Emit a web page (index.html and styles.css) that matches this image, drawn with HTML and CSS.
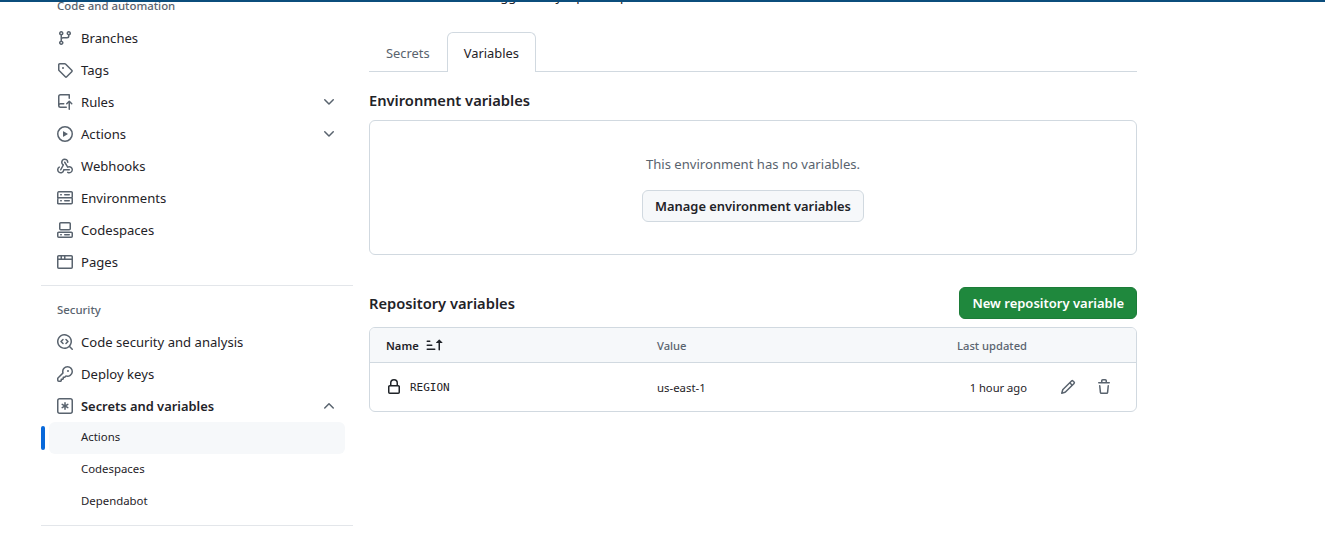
FILE: index.html
```html
<!DOCTYPE html>
<html lang="en">
<head>
<meta charset="utf-8">
<title>Secrets and variables</title>
<link rel="stylesheet" href="styles.css">
</head>
<body>
<div class="topline"></div>
<div class="page">
  <nav class="side">
    <div class="label">Code and automation</div>
    <a class="item"><svg class="ic" viewBox="0 0 16 16"><path d="M9.5 3.25a2.25 2.25 0 1 1 3 2.122V6A2.5 2.5 0 0 1 10 8.5H6a1 1 0 0 0-1 1v1.128a2.251 2.251 0 1 1-1.5 0V5.372a2.25 2.25 0 1 1 1.5 0v1.836A2.493 2.493 0 0 1 6 7h4a1 1 0 0 0 1-1v-.628A2.25 2.25 0 0 1 9.5 3.25Zm-6 0a.75.75 0 1 0 1.5 0 .75.75 0 0 0-1.5 0Zm8.25-.75a.75.75 0 1 0 0 1.5.75.75 0 0 0 0-1.5ZM4.25 12a.75.75 0 1 0 0 1.5.75.75 0 0 0 0-1.5Z"/></svg><span>Branches</span></a>
    <a class="item"><svg class="ic" viewBox="0 0 16 16"><path d="M1 7.775V2.75C1 1.784 1.784 1 2.75 1h5.025c.464 0 .91.184 1.238.513l6.25 6.25a1.75 1.75 0 0 1 0 2.474l-5.026 5.026a1.75 1.75 0 0 1-2.474 0l-6.25-6.25A1.752 1.752 0 0 1 1 7.775Zm1.5 0c0 .066.026.13.073.177l6.25 6.25a.25.25 0 0 0 .354 0l5.025-5.025a.25.25 0 0 0 0-.354l-6.25-6.25a.25.25 0 0 0-.177-.073H2.75a.25.25 0 0 0-.25.25ZM6 5a1 1 0 1 1 0 2 1 1 0 0 1 0-2Z"/></svg><span>Tags</span></a>
    <a class="item"><svg class="ic" viewBox="0 0 16 16"><path d="M1 2.5A2.5 2.5 0 0 1 3.5 0h8.75a.75.75 0 0 1 .75.75v3.5a.75.75 0 0 1-1.5 0V1.5h-8a1 1 0 0 0-1 1v6.708A2.493 2.493 0 0 1 3.5 9h3.25a.75.75 0 0 1 0 1.5H3.5a1 1 0 0 0 0 2h5.75a.75.75 0 0 1 0 1.5H3.5A2.5 2.5 0 0 1 1 11.5Zm13.23 7.79h-.001l-1.224-1.224v6.184a.75.75 0 0 1-1.5 0V9.066L10.28 10.29a.75.75 0 0 1-1.06-1.061l2.505-2.504a.75.75 0 0 1 1.06 0L15.29 9.23a.751.751 0 0 1-.018 1.042.751.751 0 0 1-1.042.018Z"/></svg><span>Rules</span><svg class="chev" viewBox="0 0 16 16"><path d="M12.78 5.22a.749.749 0 0 1 0 1.06l-4.25 4.25a.749.749 0 0 1-1.06 0L3.22 6.28a.749.749 0 1 1 1.06-1.06L8 8.939l3.72-3.719a.749.749 0 0 1 1.06 0Z"/></svg></a>
    <a class="item"><svg class="ic" viewBox="0 0 16 16"><path d="M8 0a8 8 0 1 1 0 16A8 8 0 0 1 8 0ZM1.5 8a6.5 6.5 0 1 0 13 0 6.5 6.5 0 0 0-13 0Zm4.879-2.773 4.264 2.559a.25.25 0 0 1 0 .428l-4.264 2.559A.25.25 0 0 1 6 10.559V5.442a.25.25 0 0 1 .379-.215Z"/></svg><span>Actions</span><svg class="chev" viewBox="0 0 16 16"><path d="M12.78 5.22a.749.749 0 0 1 0 1.06l-4.25 4.25a.749.749 0 0 1-1.06 0L3.22 6.28a.749.749 0 1 1 1.06-1.06L8 8.939l3.72-3.719a.749.749 0 0 1 1.06 0Z"/></svg></a>
    <a class="item"><svg class="ic" viewBox="0 0 16 16"><path d="M5.5 4.25a2.25 2.25 0 0 1 4.5 0 .75.75 0 0 0 1.5 0 3.75 3.75 0 1 0-6.14 2.889l-2.272 4.258a.75.75 0 0 0 1.324.706L7 7.25a.75.75 0 0 0-.309-1.015A2.25 2.25 0 0 1 5.5 4.25Z"/><path d="M7.364 3.607a.75.75 0 0 1 1.03.257l2.608 4.349a3.75 3.75 0 1 1-.628 6.785.75.75 0 0 1 .752-1.299 2.25 2.25 0 1 0-.033-3.88.75.75 0 0 1-1.03-.256L7.107 4.636a.75.75 0 0 1 .257-1.03Z"/><path d="M2.9 8.776A.75.75 0 0 1 2.625 9.8 2.25 2.25 0 1 0 6 11.75a.75.75 0 0 1 .75-.751h5.5a.75.75 0 0 1 0 1.5H7.425a3.751 3.751 0 1 1-5.55-3.998.75.75 0 0 1 1.024.274Z"/></svg><span>Webhooks</span></a>
    <a class="item"><svg class="ic" viewBox="0 0 16 16"><path d="M1.75 1h12.5c.966 0 1.75.784 1.75 1.75v4c0 .372-.116.717-.314 1 .198.283.314.628.314 1v4a1.75 1.75 0 0 1-1.75 1.75H1.75A1.75 1.75 0 0 1 0 13.75v-4c0-.372.116-.717.314-1a1.739 1.739 0 0 1-.314-1v-4C0 1.784.784 1 1.75 1ZM1.5 2.75v4c0 .138.112.25.25.25h12.5a.25.25 0 0 0 .25-.25v-4a.25.25 0 0 0-.25-.25H1.75a.25.25 0 0 0-.25.25Zm.25 5.75a.25.25 0 0 0-.25.25v4c0 .138.112.25.25.25h12.5a.25.25 0 0 0 .25-.25v-4a.25.25 0 0 0-.25-.25ZM7 4.75A.75.75 0 0 1 7.75 4h4.5a.75.75 0 0 1 0 1.5h-4.5A.75.75 0 0 1 7 4.75ZM7.75 10h4.5a.75.75 0 0 1 0 1.5h-4.5a.75.75 0 0 1 0-1.5ZM3 4.75A.75.75 0 0 1 3.75 4h.5a.75.75 0 0 1 0 1.5h-.5A.75.75 0 0 1 3 4.75ZM3.75 10h.5a.75.75 0 0 1 0 1.5h-.5a.75.75 0 0 1 0-1.5Z"/></svg><span>Environments</span></a>
    <a class="item"><svg class="ic" viewBox="0 0 16 16"><path d="M0 11.25c0-.966.784-1.75 1.75-1.75h12.5c.966 0 1.75.784 1.75 1.75v3A1.75 1.75 0 0 1 14.25 16H1.75A1.75 1.75 0 0 1 0 14.25Zm2-9.5C2 .784 2.784 0 3.75 0h8.5C13.216 0 14 .784 14 1.75v5a1.75 1.75 0 0 1-1.75 1.75h-8.5A1.75 1.75 0 0 1 2 6.75Zm1.75-.25a.25.25 0 0 0-.25.25v5c0 .138.112.25.25.25h8.5a.25.25 0 0 0 .25-.25v-5a.25.25 0 0 0-.25-.25Zm-2 9.5a.25.25 0 0 0-.25.25v3c0 .138.112.25.25.25h12.5a.25.25 0 0 0 .25-.25v-3a.25.25 0 0 0-.25-.25Z"/><path d="M7 12.75a.75.75 0 0 1 .75-.75h4.5a.75.75 0 0 1 0 1.5h-4.5a.75.75 0 0 1-.75-.75Zm-4 0a.75.75 0 0 1 .75-.75h.5a.75.75 0 0 1 0 1.5h-.5a.75.75 0 0 1-.75-.75Z"/></svg><span>Codespaces</span></a>
    <a class="item"><svg class="ic" viewBox="0 0 16 16"><path d="M0 2.75C0 1.784.784 1 1.75 1h12.5c.966 0 1.75.784 1.75 1.75v10.5A1.75 1.75 0 0 1 14.25 15H1.75A1.75 1.75 0 0 1 0 13.25ZM14.5 6h-13v7.25c0 .138.112.25.25.25h12.5a.25.25 0 0 0 .25-.25Zm-6-3.5v2h6V2.75a.25.25 0 0 0-.25-.25ZM5 2.5v2h2v-2Zm-3.25 0a.25.25 0 0 0-.25.25V4.5h2v-2Z"/></svg><span>Pages</span></a>
    <hr class="rule">
    <div class="label">Security</div>
    <a class="item"><svg class="ic" viewBox="0 0 16 16"><path d="M8.47 4.97a.75.75 0 0 0 0 1.06L9.94 7.5 8.47 8.97a.75.75 0 1 0 1.06 1.06l2-2a.75.75 0 0 0 0-1.06l-2-2a.75.75 0 0 0-1.06 0ZM6.53 6.03a.75.75 0 0 0-1.06-1.06l-2 2a.75.75 0 0 0 0 1.06l2 2a.75.75 0 1 0 1.06-1.06L5.06 7.5l1.47-1.47Z"/><path d="M12.246 13.307a7.501 7.501 0 1 1 1.06-1.06l2.474 2.473a.749.749 0 0 1-.326 1.275.749.749 0 0 1-.734-.215ZM1.5 7.5a6.002 6.002 0 0 0 3.608 5.504 6.002 6.002 0 0 0 6.486-1.117.748.748 0 0 1 .292-.293A6 6 0 1 0 1.5 7.5Z"/></svg><span>Code security and analysis</span></a>
    <a class="item"><svg class="ic" viewBox="0 0 16 16"><path d="M10.5 0a5.499 5.499 0 1 1-1.288 10.848l-.932.932a.749.749 0 0 1-.53.22H7v.75a.749.749 0 0 1-.22.53l-.5.5a.749.749 0 0 1-.53.22H5v.75a.749.749 0 0 1-.22.53l-.5.5a.749.749 0 0 1-.53.22h-2A1.75 1.75 0 0 1 0 14.25v-2c0-.199.079-.389.22-.53l4.932-4.932A5.5 5.5 0 0 1 10.5 0Zm-4 5.5c-.001.431.069.86.205 1.269a.75.75 0 0 1-.181.768L1.5 12.56v1.69c0 .138.112.25.25.25h1.69l.06-.06v-1.19a.75.75 0 0 1 .75-.75h1.19l.06-.06v-1.19a.75.75 0 0 1 .75-.75h1.19l1.023-1.025a.75.75 0 0 1 .768-.18A4 4 0 1 0 6.5 5.5ZM11 6a1 1 0 1 1 0-2 1 1 0 0 1 0 2Z"/></svg><span>Deploy keys</span></a>
    <a class="item open"><svg class="ic" viewBox="0 0 16 16"><path d="M0 2.75A2.75 2.75 0 0 1 2.75 0h10.5A2.75 2.75 0 0 1 16 2.75v10.5A2.75 2.75 0 0 1 13.25 16H2.75A2.75 2.75 0 0 1 0 13.25ZM2.75 1.5c-.69 0-1.25.56-1.25 1.25v10.5c0 .69.56 1.25 1.25 1.25h10.5c.69 0 1.25-.56 1.25-1.25V2.75c0-.69-.56-1.25-1.25-1.25Z"/><path d="M8 4a.75.75 0 0 1 .75.75V6.7l1.69-.975a.75.75 0 0 1 .75 1.3L9.5 8l1.69.976a.75.75 0 0 1-.75 1.298L8.75 9.3v1.951a.75.75 0 0 1-1.5 0V9.299l-1.69.976a.75.75 0 0 1-.75-1.3L6.5 8l-1.69-.975a.75.75 0 0 1 .75-1.3l1.69.976V4.75A.75.75 0 0 1 8 4Z"/></svg><span>Secrets and variables</span><svg class="chev" viewBox="0 0 16 16"><path d="M3.22 10.53a.749.749 0 0 1 0-1.06l4.25-4.25a.749.749 0 0 1 1.06 0l4.25 4.25a.749.749 0 1 1-1.06 1.06L8 6.811 4.28 10.53a.749.749 0 0 1-1.06 0Z"/></svg></a>
    <a class="sub current">Actions</a>
    <a class="sub">Codespaces</a>
    <a class="sub">Dependabot</a>
    <hr class="rule">
  </nav>
  <main class="main">
    <p class="intro">workflows that are triggered by a pull request from a fork.</p>
    <div class="tabs">
      <a class="tab">Secrets</a>
      <a class="tab active">Variables</a>
    </div>
    <h2 class="h env-h">Environment variables</h2>
    <section class="card empty">
      <p class="muted">This environment has no variables.</p>
      <button class="btn">Manage environment variables</button>
    </section>
    <div class="head-row">
      <h2 class="h">Repository variables</h2>
      <button class="btn primary">New repository variable</button>
    </div>
    <section class="card table">
      <div class="row thead">
        <div class="name-h">Name <svg class="sort" viewBox="0 0 16 16"><path d="m12.927 2.573 3 3A.25.25 0 0 1 15.75 6H13.5v6.75a.75.75 0 0 1-1.5 0V6H9.75a.25.25 0 0 1-.177-.427l3-3a.25.25 0 0 1 .354 0ZM0 12.25a.75.75 0 0 1 .75-.75h7.5a.75.75 0 0 1 0 1.5H.75a.75.75 0 0 1-.75-.75Zm0-4a.75.75 0 0 1 .75-.75h4.5a.75.75 0 0 1 0 1.5H.75A.75.75 0 0 1 0 8.25Zm0-4a.75.75 0 0 1 .75-.75h2.5a.75.75 0 0 1 0 1.5H.75A.75.75 0 0 1 0 4.25Z"/></svg></div>
        <div>Value</div>
        <div class="right">Last updated</div>
        <div></div>
      </div>
      <div class="row tbody">
        <div class="var"><svg class="lock" viewBox="0 0 16 16"><path d="M4 4a4 4 0 0 1 8 0v2h.25c.966 0 1.75.784 1.75 1.75v5.5A1.75 1.75 0 0 1 12.25 15h-8.5A1.75 1.75 0 0 1 2 13.25v-5.5C2 6.784 2.784 6 3.75 6H4Zm8.25 3.5h-8.5a.25.25 0 0 0-.25.25v5.5c0 .138.112.25.25.25h8.5a.25.25 0 0 0 .25-.25v-5.5a.25.25 0 0 0-.25-.25ZM10.5 6V4a2.5 2.5 0 1 0-5 0v2Z"/></svg><code>REGION</code></div>
        <div>us-east-1</div>
        <div class="right">1 hour ago</div>
        <div class="acts">
          <svg class="act" viewBox="0 0 16 16"><path d="M11.013 1.427a1.75 1.75 0 0 1 2.474 0l1.086 1.086a1.75 1.75 0 0 1 0 2.474l-8.61 8.61c-.21.21-.47.364-.756.445l-3.251.93a.75.75 0 0 1-.927-.928l.929-3.25c.081-.286.235-.547.445-.758l8.61-8.61Zm.176 4.823L9.75 4.81l-6.286 6.287a.253.253 0 0 0-.064.108l-.558 1.953 1.953-.558a.253.253 0 0 0 .108-.064Zm1.238-3.763a.25.25 0 0 0-.354 0L10.811 3.75l1.439 1.44 1.263-1.263a.25.25 0 0 0 0-.354Z"/></svg>
          <svg class="act" viewBox="0 0 16 16"><path d="M11 1.75V3h2.25a.75.75 0 0 1 0 1.5H2.75a.75.75 0 0 1 0-1.5H5V1.75C5 .784 5.784 0 6.75 0h2.5C10.216 0 11 .784 11 1.75ZM4.496 6.675l.66 6.6a.25.25 0 0 0 .249.225h5.19a.25.25 0 0 0 .249-.225l.66-6.6a.75.75 0 0 1 1.492.149l-.66 6.6A1.748 1.748 0 0 1 10.595 15h-5.19a1.75 1.75 0 0 1-1.741-1.575l-.66-6.6a.75.75 0 1 1 1.492-.15ZM6.5 1.75V3h3V1.75a.25.25 0 0 0-.25-.25h-2.5a.25.25 0 0 0-.25.25Z"/></svg>
        </div>
      </div>
    </section>
  </main>
</div>
</body>
</html>
```

FILE: styles.css
```css
* { box-sizing: border-box; }
html, body { margin: 0; height: 538px; overflow: hidden; background: #fff; }
body { font-family: "Noto Sans", "Open Sans", sans-serif; font-size: 13.1px; color: #1f2328; }
.topline { position: absolute; top: 0; left: 0; right: 0; height: 2px; background: #0b4d7c; z-index: 2; }
.page { display: flex; margin-top: -10px; padding-left: 41px; }
.side { width: 312px; flex: none; margin-right: 16px; }
.label { height: 32px; line-height: 31px; padding-left: 16px; font-size: 11.4px; font-weight: 500; color: #59636e; }
.item { display: flex; align-items: center; height: 32px; padding-left: 16px; }
.item span { flex: 1; margin-left: 8px; }
.ic { width: 16px; height: 16px; fill: #59636e; flex: none; }
.chev { width: 16px; height: 16px; fill: #59636e; flex: none; margin-right: 16px; }
.open span { font-weight: 600; font-size: 12.9px; }
.rule { border: 0; height: 1px; background: #e3e6ea; margin: 7px 0 8px; }
.sub { display: block; position: relative; height: 32px; line-height: 30px; margin-left: 8px; margin-right: 8px; padding-left: 32px; font-size: 11.4px; border-radius: 6px; }
.current { background: #f6f8fa; }
.current::before { content: ""; position: absolute; left: -8px; top: 4px; width: 4px; height: 24px; border-radius: 2px; background: #0969da; }
.main { width: 768px; flex: none; }
.intro { margin: -4px 0 4px; height: 42px; line-height: 21px; }
.tabs { display: flex; height: 40px; border-bottom: 1px solid #d1d9e0; }
.tab { display: block; height: 40px; line-height: 40px; padding: 0 16px; font-size: 12.9px; color: #59636e; border: 1px solid transparent; border-bottom: 0; }
.active { color: #1f2328; background: #fff; border-color: #d1d9e0; border-radius: 6px 6px 0 0; }
.h { margin: 0; font-size: 14.7px; font-weight: 600; line-height: 24px; }
.env-h { margin-top: 16px; margin-bottom: 8px; }
.card { border: 1px solid #d1d9e0; border-radius: 6px; }
.empty { height: 135px; display: flex; flex-direction: column; align-items: center; padding-top: 33px; }
.muted { margin: 0; color: #59636e; line-height: 20px; }
.btn { display: block; height: 32px; padding: 0 12px; font: 600 12.9px "Noto Sans", sans-serif; color: #1f2328; background: #f6f8fa; border: 1px solid #d1d9e0; border-radius: 6px; }
.empty .btn { margin-top: 16px; }
.head-row { display: flex; align-items: center; justify-content: space-between; margin-top: 32px; margin-bottom: 8px; }
.primary { font-size: 13px; color: #fff; background: #1f883d; border-color: #1c7c38; }
.table { overflow: hidden; height: 85px; }
.row { display: grid; grid-template-columns: 271px 1fr 110px 109px; align-items: center; padding-left: 16px; }
.thead { height: 35px; background: #f6f8fa; border-bottom: 1px solid #d1d9e0; font-size: 11.2px; font-weight: 500; color: #59636e; }
.name-h { color: #1f2328; font-weight: 600; display: flex; align-items: center; gap: 7px; }
.sort { width: 17px; height: 16px; fill: #1f2328; }
.tbody { height: 48px; font-size: 11.4px; }
.tbody .right { font-size: 11.2px; }
.var { display: flex; align-items: center; gap: 8px; }
.lock { width: 16px; height: 16px; fill: #1f2328; }
code { font: 11px "DejaVu Sans Mono", monospace; }
.right { text-align: right; }
.acts { display: flex; gap: 20px; padding-left: 33px; }
.act { width: 16px; height: 16px; fill: #59636e; }
```
